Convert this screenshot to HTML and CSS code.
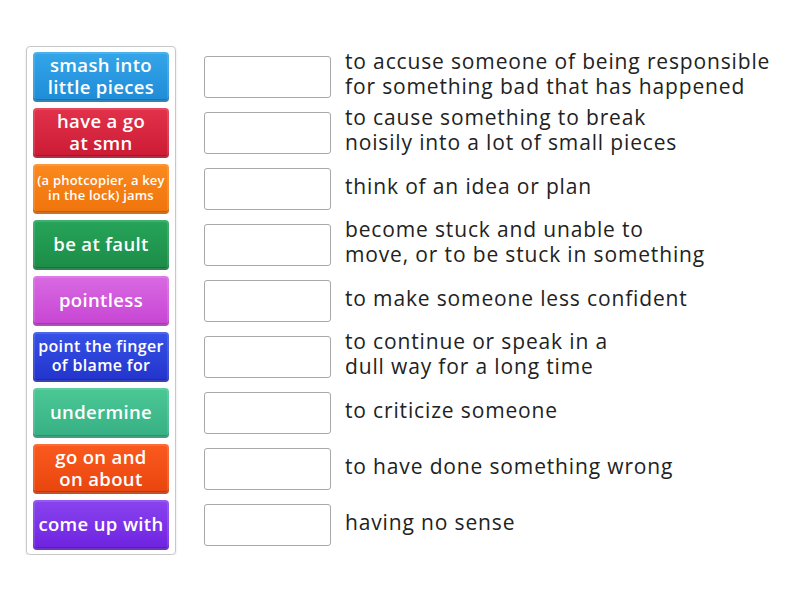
FILE: index.html
```html
<!DOCTYPE html>
<html>
<head>
    <title>Match up</title>
    <link rel="stylesheet" href="styles.css">
</head>
<body>
    <div class="game">
        <!-- tiles to drag -->
        <div class="tray">
            <div class="tile blue">smash into little pieces</div>
            <div class="tile red">have a go<br>at smn</div>
            <div class="tile orange small">(a photcopier, a key in the lock) jams</div>
            <div class="tile green">be at fault</div>
            <div class="tile pink">pointless</div>
            <div class="tile navy mid">point the finger of blame for</div>
            <div class="tile teal">undermine</div>
            <div class="tile flame">go on and<br>on about</div>
            <div class="tile purple">come up with</div>
        </div>

        <!-- empty slots and definitions -->
        <div class="rows">
            <div class="row"><div class="slot"></div><p>to accuse someone of being responsible<br>for something bad that has happened</p></div>
            <div class="row"><div class="slot"></div><p>to cause something to break<br>noisily into a lot of small pieces</p></div>
            <div class="row"><div class="slot"></div><p>think of an idea or plan</p></div>
            <div class="row"><div class="slot"></div><p>become stuck and unable to<br>move, or to be stuck in something</p></div>
            <div class="row"><div class="slot"></div><p>to make someone less confident</p></div>
            <div class="row"><div class="slot"></div><p>to continue or speak in a<br>dull way for a long time</p></div>
            <div class="row"><div class="slot"></div><p>to criticize someone</p></div>
            <div class="row"><div class="slot"></div><p>to have done something wrong</p></div>
            <div class="row"><div class="slot"></div><p>having no sense</p></div>
        </div>
    </div>
</body>
</html>
```

FILE: styles.css
```css
html, body {
    margin: 0;
    padding: 0;
    background: #fff;
}

body {
    font-family: 'Open Sans', sans-serif;
}

.game {
    display: flex;
    align-items: flex-start;
    padding: 46px 0 0 26px;
}

.tray {
    width: 136px;
    padding: 5px 6px 4px 6px;
    border: 1px solid #c8c8c8;
    border-radius: 4px;
    display: flex;
    flex-direction: column;
    gap: 6px;
    box-shadow: 0 1px 2px rgba(0, 0, 0, 0.15);
}

.tile {
    height: 50px;
    border-radius: 4px;
    display: flex;
    align-items: center;
    justify-content: center;
    text-align: center;
    color: #fff;
    font-weight: 600;
    font-size: 18.5px;
    line-height: 22px;
    letter-spacing: 0.35px;
    padding: 0 2px 3px 2px;
    box-sizing: border-box;
    box-shadow: inset 0 0 0 2px rgba(255, 255, 255, 0.12), inset 0 -3px 0 rgba(0, 0, 0, 0.18);
}
.tile.small { font-size: 13px; line-height: 15px; letter-spacing: 0.2px; }
.tile.mid { font-size: 16px; line-height: 19px; }

.blue   { background: linear-gradient(#35a6ea, #1f8bd6); }
.red    { background: linear-gradient(#e2334b, #cc1a34); }
.orange { background: linear-gradient(#fb8a1f, #ef730a); }
.green  { background: linear-gradient(#27a55a, #1b8c47); }
.pink   { background: linear-gradient(#d96ae2, #c644d3); }
.navy   { background: linear-gradient(#3652e6, #2233cc); }
.teal   { background: linear-gradient(#4cc796, #36b083); }
.flame  { background: linear-gradient(#fb5a1e, #e8450e); }
.purple { background: linear-gradient(#8a44ee, #6d22e0); }

.rows {
    margin: 3px 0 0 28px;
    display: flex;
    flex-direction: column;
}

.row {
    height: 56px;
    display: flex;
    align-items: center;
}

.slot {
    width: 125px;
    height: 40px;
    border: 1px solid #a8a8a8;
    border-radius: 3px;
    flex: none;
}

.row p {
    margin: 0 0 6px 14px;
    font-size: 21px;
    line-height: 25px;
    letter-spacing: 0.85px;
    color: #222;
    white-space: nowrap;
}
```
